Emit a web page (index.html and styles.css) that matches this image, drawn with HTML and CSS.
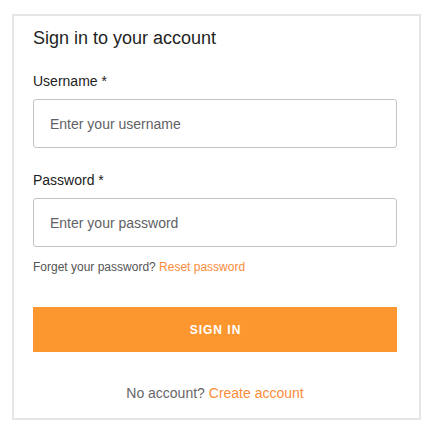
FILE: index.html
```html
<!DOCTYPE html>
<html lang="en">
<head>
<meta charset="utf-8">
<title>Sign in</title>
<link rel="stylesheet" href="styles.css">
</head>
<body>
<form class="card" onsubmit="return false">
  <h1 class="title">Sign in to your account</h1>
  <div class="field">
    <label class="label" for="username">Username *</label>
    <input class="input" id="username" type="text" placeholder="Enter your username">
  </div>
  <div class="field">
    <label class="label" for="password">Password *</label>
    <input class="input" id="password" type="password" placeholder="Enter your password">
  </div>
  <p class="hint">Forget your password? <a class="link" href="#">Reset password</a></p>
  <button class="btn" type="submit">SIGN IN</button>
  <p class="footer">No account? <a class="link" href="#">Create account</a></p>
</form>
</body>
</html>
```
FILE: styles.css
```css
html, body {
  margin: 0;
  padding: 0;
  background: #ffffff;
}
body {
  font-family: "Liberation Sans", Arial, Helvetica, sans-serif;
  color: #222222;
}
.card {
  display: flex;
  flex-direction: column;
  width: 364px;
  margin: 14px 0 0 12px;
  padding: 12px 22px 15px 19px;
  border: 2px solid #e6e6e6;
}
.title {
  margin: 0;
  font-size: 18px;
  line-height: 21px;
  font-weight: 400;
  color: #1f1f1f;
}
.field {
  display: flex;
  flex-direction: column;
  gap: 8px;
  margin-top: 22px;
}
.label {
  font-size: 14px;
  line-height: 20px;
  color: #222222;
}
.input {
  box-sizing: border-box;
  height: 49px;
  margin: 0;
  padding: 0 16px;
  border: 1px solid #c4c4c4;
  border-radius: 3px;
  font-family: inherit;
  font-size: 14px;
  color: #333333;
  background: #ffffff;
  outline: none;
}
.input::placeholder {
  color: #5f6166;
  opacity: 1;
}
.hint {
  margin: 12px 0 0;
  font-size: 12px;
  line-height: 16px;
  color: #555555;
}
.link {
  color: #fb8c3a;
  text-decoration: none;
}
.btn {
  height: 45px;
  margin-top: 32px;
  padding: 0;
  border: none;
  border-radius: 0;
  background: #fc962f;
  color: #ffffff;
  font-family: inherit;
  font-size: 12px;
  font-weight: 700;
  letter-spacing: 1px;
  text-indent: 1px;
  cursor: pointer;
}
.footer {
  margin: 31px 0 0;
  font-size: 14px;
  line-height: 20px;
  text-align: center;
  color: #666666;
}
```
